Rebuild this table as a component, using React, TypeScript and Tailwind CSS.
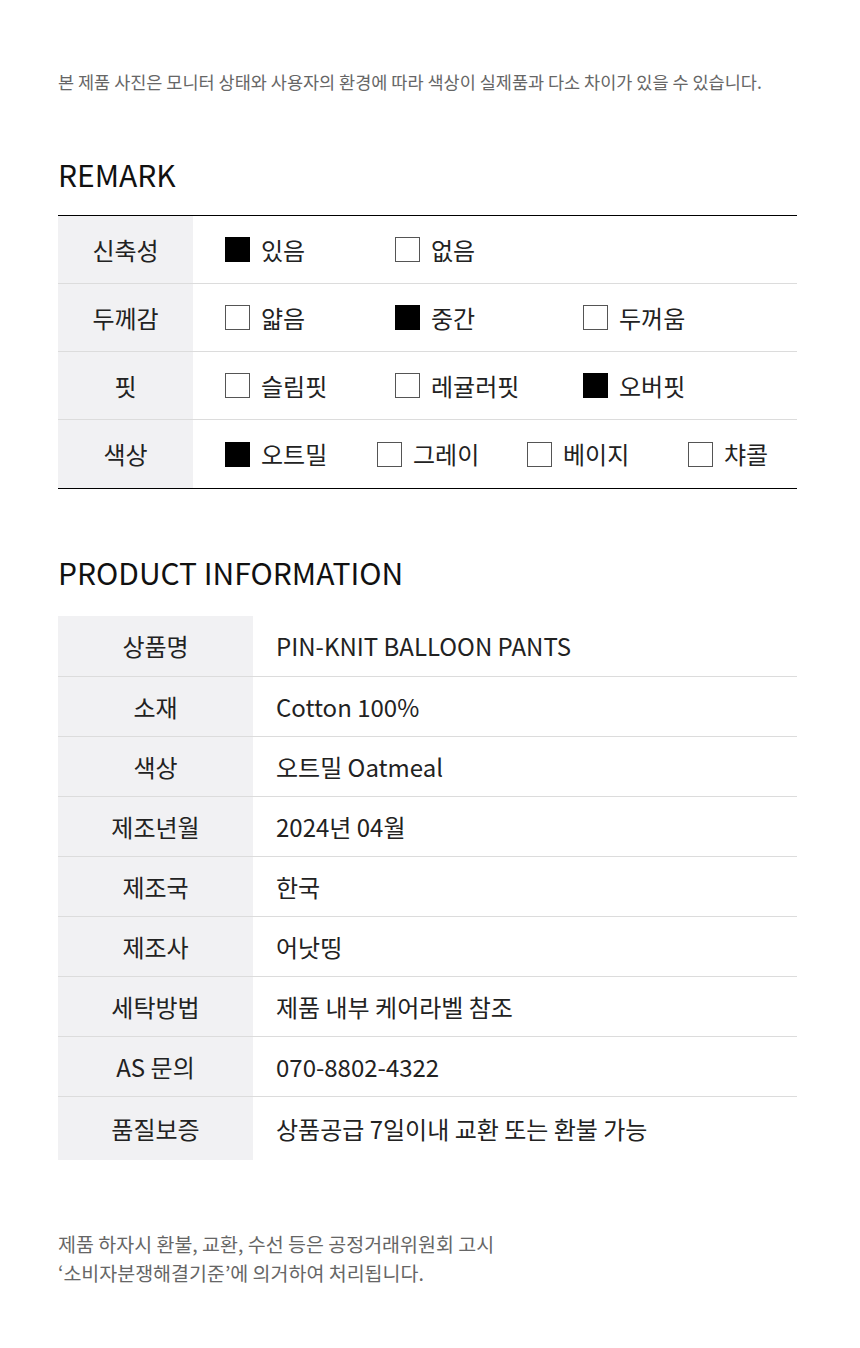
const font = { fontFamily: '"Noto Sans CJK KR", "Noto Sans", sans-serif' }

type Opt = { label: string; on: boolean; w: string }

const remark: { title: string; opts: Opt[] }[] = [
  {
    title: "신축성",
    opts: [
      { label: "있음", on: true, w: "w-[170px]" },
      { label: "없음", on: false, w: "w-[188px]" },
    ],
  },
  {
    title: "두께감",
    opts: [
      { label: "얇음", on: false, w: "w-[170px]" },
      { label: "중간", on: true, w: "w-[188px]" },
      { label: "두꺼움", on: false, w: "w-[150px]" },
    ],
  },
  {
    title: "핏",
    opts: [
      { label: "슬림핏", on: false, w: "w-[170px]" },
      { label: "레귤러핏", on: false, w: "w-[188px]" },
      { label: "오버핏", on: true, w: "w-[150px]" },
    ],
  },
  {
    title: "색상",
    opts: [
      { label: "오트밀", on: true, w: "w-[152px]" },
      { label: "그레이", on: false, w: "w-[150px]" },
      { label: "베이지", on: false, w: "w-[161px]" },
      { label: "챠콜", on: false, w: "w-[90px]" },
    ],
  },
]

const info: [string, string][] = [
  ["상품명", "PIN-KNIT BALLOON PANTS"],
  ["소재", "Cotton 100%"],
  ["색상", "오트밀 Oatmeal"],
  ["제조년월", "2024년 04월"],
  ["제조국", "한국"],
  ["제조사", "어낫띵"],
  ["세탁방법", "제품 내부 케어라벨 참조"],
  ["AS 문의", "070-8802-4322"],
  ["품질보증", "상품공급 7일이내 교환 또는 환불 가능"],
]

export default function App() {
  return (
    <div style={font} className="w-[860px] min-h-[1348px] bg-white pl-[58px] pr-[63px] text-[#222]">
      {/* notice */}
      <p className="pt-[70px] text-[17.5px] leading-[24px] text-[#666]">
        본 제품 사진은 모니터 상태와 사용자의 환경에 따라 색상이 실제품과 다소 차이가 있을 수 있습니다.
      </p>

      {/* REMARK */}
      <h2 className="mt-[61px] text-[30px] leading-[38px] text-[#111]">REMARK</h2>
      <div className="mt-[22px] border-t border-b border-black">
        {remark.map((row, i) => (
          <div
            key={row.title}
            className={`flex h-[68px] ${i < remark.length - 1 ? "border-b border-[#dcdcdc]" : ""}`}
          >
            <div className="flex w-[135px] items-center justify-center bg-[#f1f1f3] text-[24px]">
              {row.title}
            </div>
            <div className="flex flex-1 items-center pl-[32px]">
              {row.opts.map((o) => (
                <div key={o.label} className={`flex items-center gap-[11px] ${o.w}`}>
                  <span
                    className={`h-[25px] w-[25px] shrink-0 border ${
                      o.on ? "border-black bg-black" : "border-[#555] bg-white"
                    }`}
                  />
                  <span className="text-[24px] leading-none">{o.label}</span>
                </div>
              ))}
            </div>
          </div>
        ))}
      </div>

      {/* PRODUCT INFORMATION */}
      <h2 className="mt-[64px] text-[30px] leading-[38px] text-[#111]">PRODUCT INFORMATION</h2>
      <div className="mt-[25px]">
        {info.map(([k, v], i) => (
          <div
            key={k}
            className={`flex ${
              i === 0
                ? "h-[61px] border-b border-[#dcdcdc]"
                : i < info.length - 1
                  ? "h-[60px] border-b border-[#dcdcdc]"
                  : "h-[63px]"
            }`}
          >
            <div className="flex w-[195px] items-center justify-center bg-[#f1f1f3] text-[24px]">{k}</div>
            <div className="flex flex-1 items-center pl-[23px] text-[24px]">{v}</div>
          </div>
        ))}
      </div>

      {/* footer notice */}
      <div className="mt-[69px] text-[19.5px] leading-[29px] text-[#666]">
        <p>제품 하자시 환불, 교환, 수선 등은 공정거래위원회 고시</p>
        <p>‘소비자분쟁해결기준’에 의거하여 처리됩니다.</p>
      </div>
    </div>
  )
}
